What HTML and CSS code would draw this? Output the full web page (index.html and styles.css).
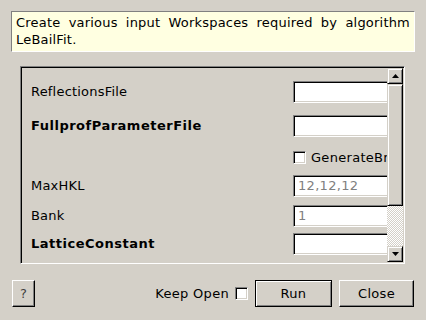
FILE: index.html
```html
<!DOCTYPE html>
<html>
<head>
<meta charset="utf-8">
<link rel="stylesheet" href="styles.css">
</head>
<body>
<div class="dialog">
  <div class="info">Create various input Workspaces required by algorithm LeBailFit.</div>
  <div class="frame">
    <div class="content">
      <div class="grid">
        <div class="label">ReflectionsFile</div>
        <div class="field"><div class="input"></div></div>
        <div class="label bold">FullprofParameterFile</div>
        <div class="field"><div class="input"></div></div>
        <div class="label"></div>
        <div class="field check-field"><span class="checkbox"></span><span class="check-text">GenerateBr</span></div>
        <div class="label">MaxHKL</div>
        <div class="field"><div class="input gray">12,12,12</div></div>
        <div class="label">Bank</div>
        <div class="field"><div class="input gray">1</div></div>
        <div class="label bold">LatticeConstant</div>
        <div class="field"><div class="input"></div></div>
      </div>
    </div>
    <div class="scrollbar">
      <div class="sb-btn"><svg width="7" height="4" viewBox="0 0 7 4"><path d="M3.5 0 L7 4 L0 4 Z" fill="#000"/></svg></div>
      <div class="sb-thumb"></div>
      <div class="sb-track"></div>
      <div class="sb-btn"><svg width="7" height="4" viewBox="0 0 7 4"><path d="M0 0 L7 0 L3.5 4 Z" fill="#000"/></svg></div>
    </div>
  </div>
  <div class="buttons">
    <div class="btn help">?</div>
    <div class="spacer"></div>
    <div class="keep">Keep Open</div>
    <span class="checkbox keep-box"></span>
    <div class="btn run">Run</div>
    <div class="btn close">Close</div>
  </div>
</div>
</body>
</html>
```
FILE: styles.css
```css
html, body {
  margin: 0;
  padding: 0;
  background: #d4d0c8;
}
body {
  font-family: "DejaVu Sans", sans-serif;
  font-size: 13px;
  color: #000;
  width: 426px;
  height: 320px;
  overflow: hidden;
}
.dialog {
  padding: 11px 11px 0 11px;
}
.info {
  background: #ffffe1;
  border: 1px solid;
  border-color: #808080 #ffffff #ffffff #808080;
  padding: 2px 4px 3px 4px;
  line-height: 17px;
  text-align: justify;
  height: 34px;
  letter-spacing: 0.2px;
}
.frame {
  margin: 14px 10px 0 9px;
  height: 194px;
  border: 1px solid;
  border-color: #808080 #ffffff #ffffff #808080;
  box-shadow: inset 1px 1px 0 #000, inset -1px -1px 0 #d4d0c8;
  padding: 1px;
  display: flex;
}
.content {
  flex: 1;
  overflow: hidden;
}
.grid {
  display: grid;
  grid-template-columns: 271px 130px;
  grid-template-rows: 34px 31px 29px 30px 28px 22px;
  padding-top: 13px;
}
.label {
  padding-left: 9px;
  height: 22px;
  line-height: 22px;
  white-space: nowrap;
  letter-spacing: 0.2px;
}
.bold {
  font-weight: bold;
  letter-spacing: 0.5px;
}
.field {
  height: 22px;
}
.input {
  box-sizing: border-box;
  height: 22px;
  width: 120px;
  background: #fff;
  border: 1px solid;
  border-color: #808080 #ffffff #ffffff #808080;
  box-shadow: inset 1px 1px 0 #000, inset -1px -1px 0 #d4d0c8;
  padding: 0 4px;
  line-height: 20px;
  letter-spacing: 0.3px;
}
.gray {
  color: #808080;
}
.check-field {
  display: flex;
  align-items: center;
  white-space: nowrap;
}
.checkbox {
  box-sizing: border-box;
  display: inline-block;
  width: 13px;
  height: 13px;
  background: #fff;
  border: 1px solid;
  border-color: #808080 #ffffff #ffffff #808080;
  box-shadow: inset 1px 1px 0 #000, inset -1px -1px 0 #d4d0c8;
  flex: none;
}
.check-text {
  margin-left: 5px;
  letter-spacing: 0.3px;
}
.scrollbar {
  width: 16px;
  display: flex;
  flex-direction: column;
}
.sb-btn, .sb-thumb {
  box-sizing: border-box;
  background: #d4d0c8;
  border: 1px solid;
  border-color: #d4d0c8 #000 #000 #d4d0c8;
  box-shadow: inset 1px 1px 0 #fff, inset -1px -1px 0 #808080;
}
.sb-btn {
  height: 16px;
  display: flex;
  align-items: center;
  justify-content: center;
  flex: none;
}
.sb-thumb {
  height: 122px;
  flex: none;
}
.sb-track {
  flex: 1;
  background: repeating-conic-gradient(#ffffff 0 25%, #d4d0c8 0 50%) 0 0 / 2px 2px;
}
.buttons {
  display: flex;
  align-items: center;
  margin-top: 16px;
  margin-left: 1px;
  margin-right: 1px;
}
.btn {
  box-sizing: border-box;
  height: 27px;
  display: flex;
  align-items: center;
  justify-content: center;
  background: #d4d0c8;
  border: 1px solid;
  border-color: #ffffff #000 #000 #ffffff;
  box-shadow: inset -1px -1px 0 #808080;
  letter-spacing: 0.3px;
}
.help {
  width: 23px;
  color: #404040;
}
.spacer {
  flex: 1;
}
.keep {
  margin-right: 6px;
  letter-spacing: 0.3px;
}
.keep-box {
  margin-right: 7px;
}
.run {
  width: 77px;
  border: 1px solid #000;
  box-shadow: inset 1px 1px 0 #fff, inset -1px -1px 0 #808080;
}
.close {
  width: 75px;
  margin-left: 7px;
}
```
